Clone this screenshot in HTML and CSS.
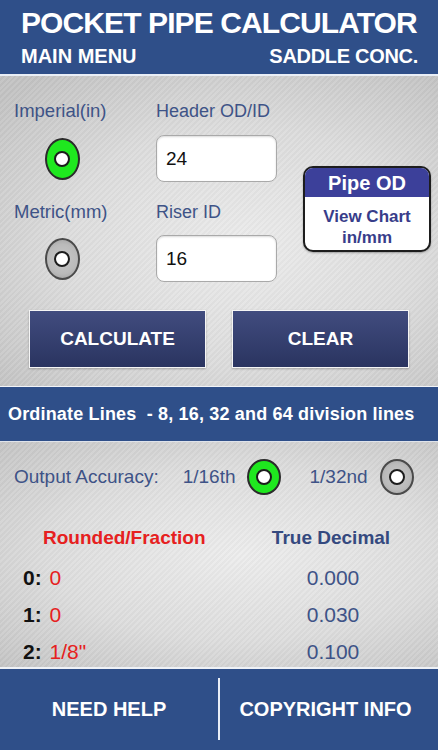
FILE: index.html
```html
<!DOCTYPE html>
<html>
<head>
<meta charset="utf-8">
<link rel="stylesheet" href="styles.css">
</head>
<body>
<div class="app">
  <header class="header">
    <div class="title">POCKET PIPE CALCULATOR</div>
    <div class="subtitle">
      <span>MAIN MENU</span>
      <span class="sub-right">SADDLE CONC.</span>
    </div>
  </header>

  <section class="top">
    <div class="form-grid">
      <div class="label lbl-1">Imperial(in)</div>
      <div class="label lbl-2 col2">Header OD/ID</div>
      <div class="radio-cell r1"><span class="radio on"><span class="dot"></span></span></div>
      <div class="input-box col2 in1">24</div>
      <div class="label lbl-3">Metric(mm)</div>
      <div class="label lbl-4 col2">Riser ID</div>
      <div class="radio-cell r2"><span class="radio off"><span class="dot"></span></span></div>
      <div class="input-box col2 in2">16</div>
      <div class="pipe-btn">
        <div class="pipe-head">Pipe OD</div>
        <div class="pipe-body">View Chart<br>in/mm</div>
      </div>
    </div>
    <div class="actions">
      <div class="btn">CALCULATE</div>
      <div class="btn">CLEAR</div>
    </div>
  </section>

  <div class="band">Ordinate Lines&nbsp; - 8, 16, 32 and 64 division lines</div>

  <section class="lower">
    <div class="accuracy">
      <span class="acc-label">Output Accuracy:</span>
      <span class="acc-opt first">1/16th</span>
      <span class="radio small on"><span class="dot"></span></span>
      <span class="acc-opt second">1/32nd</span>
      <span class="radio small off"><span class="dot"></span></span>
    </div>
    <div class="results">
      <div class="res-head red">Rounded/Fraction</div>
      <div class="res-head blue">True Decimal</div>
      <div class="res-left"><b>0:</b> <span class="red-val">0</span></div>
      <div class="res-right">0.000</div>
      <div class="res-left"><b>1:</b> <span class="red-val">0</span></div>
      <div class="res-right">0.030</div>
      <div class="res-left"><b>2:</b> <span class="red-val">1/8"</span></div>
      <div class="res-right">0.100</div>
    </div>
  </section>

  <footer class="footer">
    <div class="foot-item left">NEED HELP</div>
    <div class="divider"></div>
    <div class="foot-item right">COPYRIGHT INFO</div>
  </footer>
</div>
</body>
</html>
```
FILE: styles.css
```css
* { box-sizing: border-box; }
html, body {
  margin: 0;
  padding: 0;
  width: 438px;
  height: 750px;
  overflow: hidden;
  font-family: "Liberation Sans", Arial, sans-serif;
}
.app {
  width: 438px;
  height: 750px;
  display: flex;
  flex-direction: column;
  background: #d4d4d4;
}
.header {
  height: 76px;
  background: #2f4f89;
  border-bottom: 2px solid #e9eef6;
  color: #fff;
  font-weight: bold;
  padding: 6px 20px 0 21px;
  flex: none;
}
.title {
  font-size: 30px;
  line-height: 34px;
  letter-spacing: -0.9px;
  white-space: nowrap;
}
.subtitle {
  margin-top: 4px;
  display: flex;
  justify-content: space-between;
  font-size: 20px;
  line-height: 24px;
}
.sub-right { letter-spacing: -0.3px; }

.top {
  height: 310px;
  flex: none;
  padding-top: 22px;
  background:
    repeating-linear-gradient(135deg, rgba(255,255,255,0.06) 0 2px, rgba(0,0,0,0.025) 2px 4px),
    radial-gradient(ellipse 75% 70% at 55% 55%, #ececec 0%, #dcdcdc 55%, #c3c3c3 100%);
}
.form-grid {
  display: grid;
  grid-template-columns: 94px 121px 106px;
  column-gap: 48px;
  grid-template-rows: 37px 47px 53px 47px;
  margin-left: 14px;
}
.form-grid > .col2 { grid-column: 2; }
.label {
  font-size: 18.5px;
  line-height: 26px;
  color: #3e5387;
  white-space: nowrap;
  align-self: end;
}
.lbl-1, .lbl-2 { grid-row: 1; margin-bottom: 11px; }
.lbl-1 { grid-column: 1; }
.lbl-3, .lbl-4 { grid-row: 3; margin-bottom: 10px; }
.lbl-3 { grid-column: 1; }
.lbl-2, .lbl-4 { font-size: 18px; }
.r1 { grid-row: 2; grid-column: 1; }
.r2 { grid-row: 4; grid-column: 1; }
.in1 { grid-row: 2; }
.in2 { grid-row: 4; }
.radio-cell {
  display: flex;
  align-items: center;
  justify-content: center;
  padding-left: 2px;
}
.radio {
  display: inline-flex;
  align-items: center;
  justify-content: center;
  width: 35px;
  height: 42px;
  border-radius: 50%;
  border: 2px solid #2b2b2b;
  flex: none;
}
.radio.on { background: #1fe81f; }
.radio.off {
  background: radial-gradient(circle, #c8c8c8 0%, #bababa 60%, #9a9a9a 100%);
  border-color: #4a4a4a;
}
.radio .dot {
  width: 16px;
  height: 16px;
  border-radius: 50%;
  background: #fff;
  border: 2px solid #1c1c1c;
}
.radio.small { width: 34px; height: 36px; }

.input-box {
  background: #fff;
  border: 1px solid #a9a9a9;
  border-radius: 8px;
  box-shadow: inset 0 1px 2px rgba(0,0,0,0.15);
  font-size: 19px;
  color: #111;
  display: flex;
  align-items: center;
  padding-left: 9px;
}
.pipe-btn {
  grid-column: 3;
  grid-row: 2 / 5;
  align-self: center;
  margin-left: -22px;
  height: 86px;
  border: 2px solid #1d1d1d;
  border-radius: 10px;
  background: #fff;
  overflow: hidden;
  text-align: center;
  font-weight: bold;
  box-shadow: 0 1px 2px rgba(0,0,0,0.3);
}
.pipe-head {
  background: #3c409a;
  color: #fff;
  font-size: 20px;
  height: 29px;
  line-height: 31px;
}
.pipe-body {
  color: #383d8a;
  font-size: 17px;
  line-height: 21px;
  padding-top: 9px;
}

.actions {
  display: flex;
  gap: 26px;
  padding-left: 29px;
  margin-top: 28px;
}
.btn {
  width: 177px;
  height: 58px;
  border: 1.5px solid #f5f5f5;
  background: linear-gradient(#414c7f, #2a3460);
  color: #fff;
  font-weight: bold;
  font-size: 19px;
  display: flex;
  align-items: center;
  justify-content: center;
  box-shadow: 0 1px 2px rgba(0,0,0,0.25);
}

.band {
  height: 56px;
  flex: none;
  background: #2f4f89;
  border-top: 1px solid #f2f4f8;
  border-bottom: 1px solid #dfe3ea;
  color: #fff;
  font-weight: bold;
  font-size: 18px;
  letter-spacing: 0.17px;
  line-height: 54px;
  padding-left: 8px;
  white-space: nowrap;
}

.lower {
  flex: 1;
  overflow: hidden;
  padding-top: 20px;
  background:
    repeating-linear-gradient(135deg, rgba(255,255,255,0.06) 0 2px, rgba(0,0,0,0.025) 2px 4px),
    radial-gradient(ellipse 80% 70% at 55% 50%, #ededed 0%, #dddddd 55%, #c4c4c4 100%);
}
.accuracy {
  display: flex;
  align-items: center;
  height: 30px;
  padding-left: 14px;
  font-size: 19px;
  color: #3e5387;
  white-space: nowrap;
}
.acc-opt.first { margin-left: 24px; margin-right: 11px; }
.acc-opt.second { margin-left: 29px; margin-right: 12px; }

.results {
  display: grid;
  grid-template-columns: 224px 1fr;
  grid-template-rows: 36px 37px 37px 37px;
  margin-top: 31px;
}
.res-head {
  font-weight: bold;
  font-size: 19px;
  line-height: 30px;
}
.res-head.red { color: #e62020; padding-left: 43px; }
.res-head.blue { color: #34497f; text-align: center; }
.res-left {
  font-size: 21px;
  line-height: 37px;
  padding-left: 23px;
  color: #111;
}
.res-left b { font-weight: bold; }
.red-val { color: #e62020; margin-left: 2px; }
.res-right {
  font-size: 21px;
  line-height: 37px;
  text-align: center;
  padding-left: 4px;
  color: #3e5387;
}

.footer {
  height: 83px;
  flex: none;
  background: #2f4f89;
  border-top: 2px solid #eef1f6;
  display: flex;
  align-items: stretch;
  color: #fff;
  font-weight: bold;
  font-size: 20px;
}
.foot-item {
  display: flex;
  align-items: center;
  justify-content: center;
}
.foot-item.left { width: 218px; }
.foot-item.right { flex: 1; padding-right: 7px; }
.divider {
  width: 2px;
  background: #e9eef6;
  margin: 9px 0 10px;
}
```
